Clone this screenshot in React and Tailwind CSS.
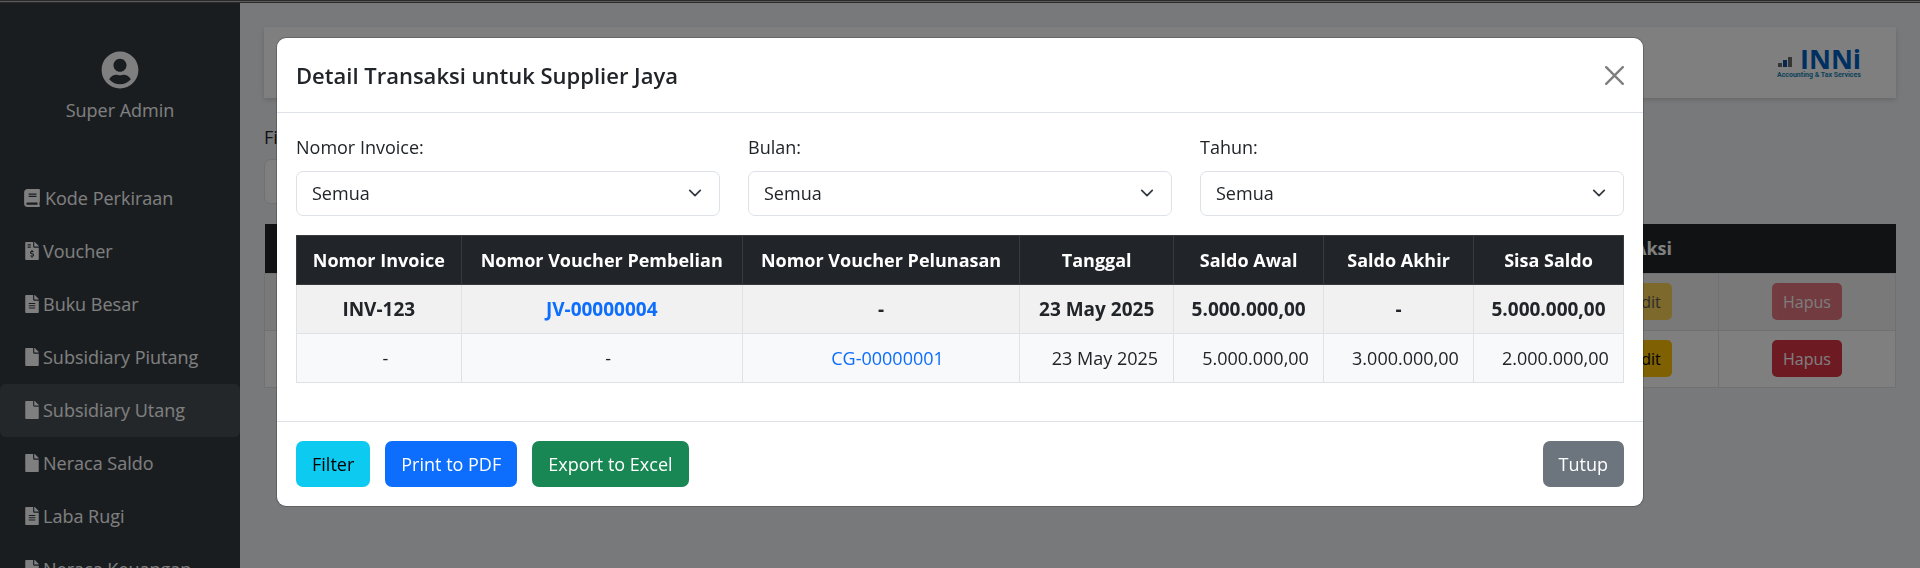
import { FaBook, FaFile, FaFileAlt, FaFileInvoiceDollar, FaUserCircle } from "react-icons/fa";

const menu = [
  { label: "Kode Perkiraan", Icon: FaBook },
  { label: "Voucher", Icon: FaFileInvoiceDollar },
  { label: "Buku Besar", Icon: FaFileAlt },
  { label: "Subsidiary Piutang", Icon: FaFile },
  { label: "Subsidiary Utang", Icon: FaFile, active: true },
  { label: "Neraca Saldo", Icon: FaFile },
  { label: "Laba Rugi", Icon: FaFileAlt },
  { label: "Neraca Keuangan", Icon: FaFileAlt },
];

const filters = [
  { id: "invoice", label: "Nomor Invoice:" },
  { id: "bulan", label: "Bulan:" },
  { id: "tahun", label: "Tahun:" },
];

const columns = [
  { title: "Nomor Invoice", width: "w-[12.4%]" },
  { title: "Nomor Voucher Pembelian", width: "w-[21.2%]" },
  { title: "Nomor Voucher Pelunasan", width: "w-[20.9%]" },
  { title: "Tanggal", width: "w-[11.6%]" },
  { title: "Saldo Awal", width: "w-[11.3%]" },
  { title: "Saldo Akhir", width: "w-[11.3%]" },
  { title: "Sisa Saldo", width: "w-[11.3%]" },
];

function Sidebar() {
  return (
    <aside className="w-60 shrink-0 overflow-hidden bg-[#343b41] text-white">
      <div className="flex flex-col items-center gap-[7px] pt-12">
        <FaUserCircle className="size-[38px]" />
        <span className="leading-7">Super Admin</span>
      </div>
      <nav className="mt-12 flex flex-col">
        {menu.map(({ label, Icon, active }) => (
          <a
            key={label}
            href="#"
            className={`flex items-center gap-1 rounded-md py-3 pl-[23px] leading-[29px] whitespace-nowrap ${active ? "bg-[#494f55]" : ""}`}
          >
            <svg viewBox={Icon === FaBook ? "0 0 18 20" : "0 0 16 20"} className="h-5 w-auto shrink-0">
              <Icon height="20" width={Icon === FaBook ? "18" : "16"} />
            </svg>
            {label}
          </a>
        ))}
      </nav>
    </aside>
  );
}

function Logo() {
  return (
    <svg width="88" height="49" viewBox="0 0 88 49" role="img" aria-label="INNi Accounting & Tax Services">
      <rect x="2" y="25" width="4" height="4" fill="#6b6b6b" />
      <rect x="7" y="22" width="4" height="7" fill="#0a4fa0" />
      <rect x="12" y="19" width="4" height="10" fill="#6b6b6b" />
      <text x="24" y="31" fontFamily="Open Sans, sans-serif" fontWeight="700" fontSize="27" fill="#0060c4">INNi</text>
      <text x="1" y="39" fontFamily="Roboto, sans-serif" fontWeight="700" fontSize="7" fill="#1585b4">Accounting &amp; Tax Services</text>
    </svg>
  );
}

function ActionRow({ disabled }) {
  const cell = "h-[57px] border border-[#dee2e6] text-center";
  const btn = "h-[37px] rounded-[5px] px-[11px] text-base disabled:opacity-65";
  return (
    <tr className={disabled ? "bg-[#f2f2f2]" : "bg-white"}>
      <td className={cell} />
      <td className={cell} />
      <td className={cell}>
        <button type="button" disabled={disabled} className={`${btn} bg-[#ffc107] text-black`}>Edit</button>
      </td>
      <td className={cell}>
        <button type="button" disabled={disabled} className={`${btn} bg-[#dc3545] text-white`}>Hapus</button>
      </td>
    </tr>
  );
}

function Page() {
  return (
    <main className="min-w-0 flex-1 bg-[#f1f3f6] px-6 pt-6">
      <header className="flex h-[71px] items-center justify-end bg-white pr-8 shadow-[0_2px_5px_rgba(0,0,0,0.15)]">
        <Logo />
      </header>
      <div className="mt-[25px] flex w-[424px] flex-col gap-2">
        <label htmlFor="page-filter" className="leading-7">Fi</label>
        <select id="page-filter" className="h-[45px] appearance-none rounded-[7px] border border-[#dee2e6] bg-white" />
      </div>
      <table className="mt-5 w-full table-fixed border-collapse">
        <colgroup>
          <col />
          <col className="w-[164px]" />
          <col className="w-[144px]" />
          <col className="w-[177px]" />
        </colgroup>
        <thead className="bg-[#212529] text-white">
          <tr>
            <th className="h-[49px]" />
            <th colSpan={3} className="font-bold">Aksi</th>
          </tr>
        </thead>
        <tbody>
          <ActionRow disabled />
          <ActionRow />
        </tbody>
      </table>
    </main>
  );
}

function FilterSelect({ id, label }) {
  return (
    <div className="flex flex-col gap-2">
      <label htmlFor={id} className="leading-[31px]">{label}</label>
      <div className="relative">
        <select id={id} className="h-[45px] w-full appearance-none rounded-[7px] border border-[#dee2e6] bg-white px-[15px]">
          <option>Semua</option>
        </select>
        <svg viewBox="0 0 16 16" className="pointer-events-none absolute top-[15px] right-[18px] size-[14px]" fill="none" stroke="#343a40" strokeWidth="2" strokeLinecap="round" strokeLinejoin="round">
          <path d="m2 5 6 6 6-6" />
        </svg>
      </div>
    </div>
  );
}

function TransactionTable() {
  const cell = "h-[49px] border border-[#dee2e6]";
  const sub = `${cell} pl-[28px] pr-[15px]`;
  return (
    <table className="mt-[19px] w-full table-fixed border-collapse whitespace-nowrap">
      <colgroup>
        {columns.map((c) => <col key={c.title} className={c.width} />)}
      </colgroup>
      <thead className="bg-[#212529] text-white">
        <tr>
          {columns.map((c) => <th key={c.title} className="h-[49px] border border-[#373b3e] font-bold">{c.title}</th>)}
        </tr>
      </thead>
      <tbody>
        <tr className="bg-[#f1f1f1] text-center text-[19px] font-bold">
          <td className={cell}>INV-123</td>
          <td className={cell}><a href="#" className="text-[#0d6efd]">JV-00000004</a></td>
          <td className={cell}>-</td>
          <td className={cell}>23 May 2025</td>
          <td className={cell}>5.000.000,00</td>
          <td className={cell}>-</td>
          <td className={cell}>5.000.000,00</td>
        </tr>
        <tr className="bg-[#f8f9fa] text-center">
          <td className={sub}>-</td>
          <td className={sub}>-</td>
          <td className={sub}><a href="#" className="text-[#0d6efd]">CG-00000001</a></td>
          <td className={`${sub} text-right`}>23 May 2025</td>
          <td className={`${sub} text-right`}>5.000.000,00</td>
          <td className={`${sub} text-right`}>3.000.000,00</td>
          <td className={`${sub} text-right`}>2.000.000,00</td>
        </tr>
      </tbody>
    </table>
  );
}

function Modal() {
  const btn = "h-[46px] rounded-[7px] px-4";
  return (
    <div className="fixed inset-x-0 top-[3px] bottom-0 overflow-hidden bg-black/50 px-6 pt-[34px]">
      <div role="dialog" aria-labelledby="modal-title" className="mx-auto max-w-[1368px] rounded-[10px] border border-black/20 bg-white bg-clip-padding">
        <div className="flex items-center justify-between border-b border-[#dee2e6] p-[19px]">
          <h5 id="modal-title" className="text-[22px] leading-9 font-semibold">Detail Transaksi untuk Supplier Jaya</h5>
          <button type="button" aria-label="Tutup" className="opacity-50">
            <svg viewBox="0 0 16 16" className="size-[19px]" fill="#000">
              <path d="M.293.293a1 1 0 0 1 1.414 0L8 6.586 14.293.293a1 1 0 1 1 1.414 1.414L9.414 8l6.293 6.293a1 1 0 0 1-1.414 1.414L8 9.414l-6.293 6.293a1 1 0 0 1-1.414-1.414L6.586 8 .293 1.707a1 1 0 0 1 0-1.414z" />
            </svg>
          </button>
        </div>
        <div className="px-[19px] pt-[19px] pb-[38px]">
          <div className="grid grid-cols-3 gap-7">
            {filters.map((f) => <FilterSelect key={f.id} {...f} />)}
          </div>
          <TransactionTable />
        </div>
        <div className="flex gap-[15px] border-t border-[#dee2e6] p-[19px]">
          <button type="button" className={`${btn} bg-[#0dcaf0] text-black`}>Filter</button>
          <button type="button" className={`${btn} bg-[#0d6efd] text-white`}>Print to PDF</button>
          <button type="button" className={`${btn} bg-[#198754] text-white`}>Export to Excel</button>
          <button type="button" className={`${btn} ml-auto bg-[#6c757d] text-white`}>Tutup</button>
        </div>
      </div>
    </div>
  );
}

export default function App() {
  return (
    <div className="flex h-screen flex-col overflow-hidden font-['Open_Sans',sans-serif] text-[18px] text-[#212529]">
      <div className="h-[3px] shrink-0 border-y border-[#2b2b2b] bg-[#5a5a5a]" />
      <div className="flex min-h-0 flex-1">
        <Sidebar />
        <Page />
      </div>
      <Modal />
    </div>
  );
}
